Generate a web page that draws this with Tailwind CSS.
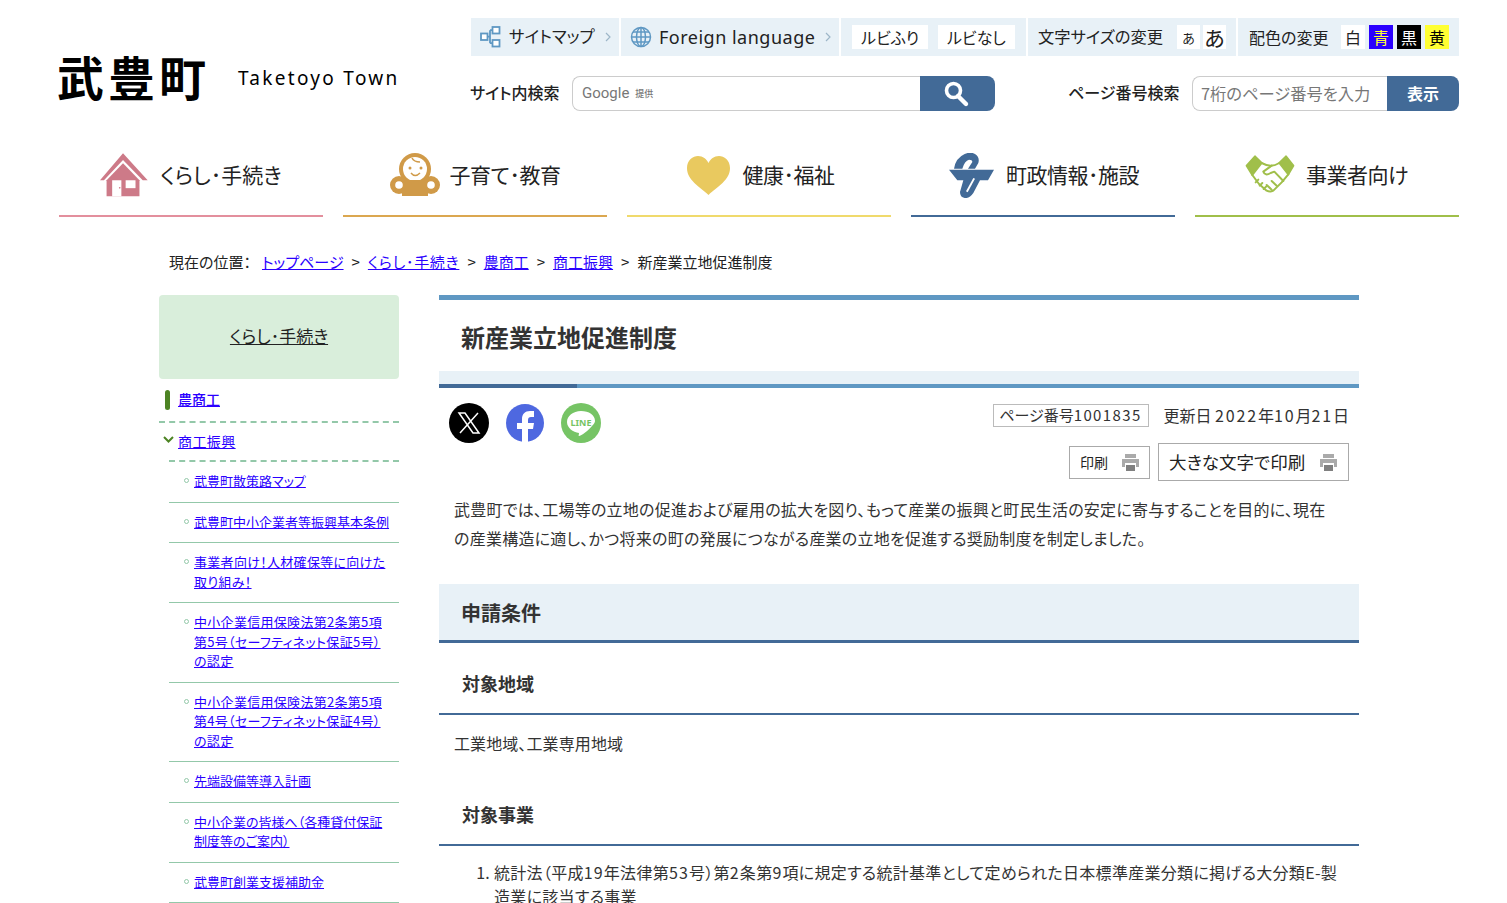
<!DOCTYPE html>
<html lang="ja">
  <head>
    <meta charset="UTF-8" />
    <title>新産業立地促進制度 - 武豊町</title>
    <script src="https://cdn.jsdelivr.net/npm/@tailwindcss/browser@4"></script>
  </head>
  <body class="h-[903px] overflow-hidden bg-white text-[#222] [font-feature-settings:'palt'] font-['Noto_Sans_CJK_JP','Noto_Sans',sans-serif]">
    <!-- header -->
    <header class="mx-[59px] w-[1400px] h-[130px] flex justify-between">
      <div class="flex items-center gap-[28px] pt-[26px] h-[130px]">
        <span class="-ml-[2px] mb-[6px] text-[47px] leading-none font-bold tracking-[4px] text-black">武豊町</span>
        <span class="text-[19px] tracking-[2.3px] text-black font-['Noto_Sans',sans-serif]">Taketoyo Town</span>
      </div>
      <div class="w-[988px] pt-[18px]">
        <div class="flex h-[38px] gap-[2px] text-[16.5px] leading-none">
          <a class="w-[148px] bg-[#e8f1f7] flex items-center pl-[9px] pb-[1px] whitespace-nowrap">
            <svg class="w-[22px] h-[22px] mr-[7px]" viewBox="0 0 22 22" fill="#fff" stroke="#5f98c3" stroke-width="1.8"><rect x="1" y="7.5" width="6.5" height="6.5"/><rect x="12.5" y="1" width="7" height="6.5"/><rect x="12.5" y="14" width="7" height="6.5"/><path d="M7.5 10.7h2.5M10 4.2v13M10 4.2h2.5M10 17.2h2.500" fill="none"/></svg>
            <span>サイトマップ</span>
            <svg class="ml-[10px] w-[6px] h-[10px]" viewBox="0 0 6 10" fill="none" stroke="#9db6c8" stroke-width="1.200"><path d="M1 1l4 4-4 4"/></svg>
          </a>
          <a class="w-[218px] bg-[#e8f1f7] flex items-center pl-[9px] pb-[1px] whitespace-nowrap">
            <svg class="w-[22px] h-[22px] mr-[7px]" viewBox="0 0 22 22" fill="none" stroke="#5f98c3" stroke-width="1.5"><circle cx="11" cy="11" r="9.500"/><ellipse cx="11" cy="11" rx="4.500" ry="9.500"/><path d="M11 1.500v19M1.500 11h19M3 6h16M3 16h16"/></svg>
            <span class="text-[18px] font-['Noto_Sans',sans-serif] tracking-[0.5px]">Foreign language</span>
            <svg class="ml-[10px] w-[6px] h-[10px]" viewBox="0 0 6 10" fill="none" stroke="#9db6c8" stroke-width="1.200"><path d="M1 1l4 4-4 4"/></svg>
          </a>
          <div class="w-[185px] bg-[#e8f1f7] flex items-center justify-center gap-[10px] text-[16px]">
            <span class="bg-white px-[9px] h-[24px] flex items-center pb-[1px]">ルビふり</span>
            <span class="bg-white px-[9px] h-[24px] flex items-center pb-[1px]">ルビなし</span>
          </div>
          <div class="w-[208px] bg-[#e8f1f7] flex items-center pl-[10px] text-[16.3px]">
            <span class="pb-[1px]">文字サイズの変更</span>
            <span class="ml-auto bg-white w-[23px] h-[24px] flex items-center justify-center text-[13px]">あ</span>
            <span class="ml-[3px] mr-[10px] bg-white w-[23px] h-[24px] flex items-center justify-center text-[21px]">あ</span>
          </div>
          <div class="flex-1 bg-[#e8f1f7] flex items-center pl-[11px] text-[16px]">
            <span class="pb-[1px]">配色の変更</span>
            <span class="ml-auto bg-white w-[24px] h-[24px] flex items-center justify-center">白</span>
            <span class="ml-[4px] bg-[#2a00ff] text-[#ffff33] w-[24px] h-[24px] flex items-center justify-center">青</span>
            <span class="ml-[4px] bg-black text-white w-[24px] h-[24px] flex items-center justify-center">黒</span>
            <span class="ml-[4px] mr-[10px] bg-[#ffff33] text-black w-[24px] h-[24px] flex items-center justify-center">黄</span>
          </div>
        </div>
        <div class="flex items-center mt-[20px] h-[35px]">
          <span class="w-[101px] shrink-0 -ml-[1px] -mt-[3px] text-[16px] font-medium whitespace-nowrap">サイト内検索</span>
          <div class="w-[423px] ml-[1px] h-[35px] flex">
            <div class="flex-1 border border-[#ccc] border-r-0 rounded-l-[8px] flex items-center pl-[9px] text-[#777]">
              <span class="text-[15px] font-['Roboto',sans-serif]">Google</span>
              <span class="text-[9px] ml-[6px] font-medium">提供</span>
            </div>
            <div class="w-[75px] bg-[#426a97] rounded-r-[8px] flex items-center justify-center pr-[4px]">
              <svg class="w-[28px] h-[28px]" viewBox="0 0 28 28" fill="none" stroke="#fff"><circle cx="11.500" cy="10.500" r="7" stroke-width="3.600"/><path d="M16 16l8 8" stroke-width="4.400" stroke-linecap="round"/></svg>
            </div>
          </div>
          <span class="ml-[73px] w-[124px] shrink-0 -mt-[3px] text-[16px] font-medium whitespace-nowrap">ページ番号検索</span>
          <div class="w-[267px] h-[35px] flex">
            <div class="flex-1 border border-[#ccc] border-r-0 rounded-l-[8px] flex items-center pl-[8px] text-[16.3px] text-[#777] whitespace-nowrap">7桁のページ番号を入力</div>
            <div class="w-[72px] bg-[#426a97] rounded-r-[8px] flex items-center justify-center text-white font-bold text-[16px] pb-[2px]">表示</div>
          </div>
        </div>
      </div>
    </header>

    <!-- global nav -->
    <nav class="mx-[59px] w-[1400px] grid grid-cols-5 gap-[20px] h-[87px]">
      <a class="flex items-center justify-center gap-[12px] border-b-2 border-[#e38f9d] pt-[5px] text-[21px]">
        <svg class="w-[48px] h-[44px]" viewBox="15 15 146 132">
          <path d="M85 15L160 97H145L85 35 27 97H15Z" fill="#cd7a88"/>
          <path d="M85 45L135 97V146H35V97Z" fill="#cd7a88"/>
          <rect x="52" y="97" width="28" height="49" fill="#fff"/>
          <rect x="93" y="97" width="30" height="24" fill="#fff"/>
          <circle cx="75" cy="120" r="2.500" fill="#cd7a88"/>
        </svg>
        <span>くらし･手続き</span>
      </a>
      <a class="flex items-center justify-center gap-[10px] border-b-2 border-[#dba750] pt-[5px] text-[21px] tracking-[-0.5px]">
        <svg class="w-[50px] h-[44px]" viewBox="0 0 50 44"><circle cx="25" cy="16" r="16" fill="#d09a48"/><circle cx="25" cy="16" r="12" fill="#fff"/><circle cx="9" cy="32" r="9" fill="#d09a48"/><circle cx="41" cy="32" r="9" fill="#d09a48"/><rect x="12" y="27" width="26" height="16" fill="#d09a48"/><circle cx="9" cy="32" r="3.800" fill="#fff"/><circle cx="41" cy="32" r="3.800" fill="#fff"/><circle cx="20" cy="15" r="1.500" fill="#d09a48"/><circle cx="31" cy="15" r="1.500" fill="#d09a48"/><path d="M21 20q4 5 9 0M22 5q2 4 8 4" fill="none" stroke="#d09a48" stroke-width="1.500"/></svg>
        <span>子育て･教育</span>
      </a>
      <a class="flex items-center justify-center gap-[13px] border-b-2 border-[#f0da6c] pt-[5px] pl-[3px] text-[21px] tracking-[-0.5px]">
        <svg class="w-[43px] h-[39px]" viewBox="0 0 43 39"><path d="M21.500 39C12 30 0 24 0 12 0 4 6 0 11 0c5 0 8.500 3 10.500 7C23.500 3 27 0 32 0c5 0 11 4 11 12 0 12-12 18-21.500 27Z" fill="#e9c95f"/></svg>
        <span>健康･福祉</span>
      </a>
      <a class="flex items-center justify-center gap-[12px] border-b-2 border-[#426a97] pt-[5px] pl-[2px] text-[21px] tracking-[-0.5px]">
        <svg class="w-[45px] h-[45px]" viewBox="15 15 135 135" fill="#426a97">
          <path d="M15 65H150L132 97H108L88 135Q76 152 62 150 48 148 48 132L58 97H40Z"/>
          <path d="M30 62Q35 30 62 18 80 10 93 18 108 28 103 45L93 62H72L85 42Q85 35 75 35 62 38 55 62Z"/>
          <path d="M66 130L88 90 93 92 71 133Z" fill="#fff"/>
        </svg>
        <span>町政情報･施設</span>
      </a>
      <a class="flex items-center justify-center gap-[11px] border-b-2 border-[#a0bf4a] pt-[5px] pr-[1px] text-[21px] tracking-[-0.5px]">
        <svg class="w-[50px] h-[40px]" viewBox="20 18 150 120" fill="none" stroke="#a0bf4a" stroke-width="6" stroke-linejoin="round" stroke-linecap="round">
          <path d="M25 50L50 22 70 42 42 78Z" fill="#a0bf4a"/>
          <path d="M165 50L143 22 123 42 150 76Z" fill="#a0bf4a"/>
          <path d="M70 42Q85 50 97 50 110 50 123 42M42 78L62 105 85 125Q95 130 105 125L130 100 150 76"/>
          <path d="M100 50L75 68Q80 82 97 72L108 68 135 96M115 110L100 96M100 122L85 108"/>
          <path d="M60 92L52 100M72 102L64 110M84 112L76 120"/>
        </svg>
        <span>事業者向け</span>
      </a>
    </nav>

    <!-- breadcrumb -->
    <div class="ml-[169px] mt-[35px] text-[15px] leading-[20px] flex gap-[8px] h-[20px]">
      <span class="mr-[3px]">現在の位置：</span>
      <a class="text-[#2a00ff] underline">トップページ</a><span>&gt;</span>
      <a class="text-[#2a00ff] underline tracking-[0.7px]">くらし･手続き</a><span>&gt;</span>
      <a class="text-[#2a00ff] underline">農商工</a><span>&gt;</span>
      <a class="text-[#2a00ff] underline">商工振興</a><span>&gt;</span>
      <span>新産業立地促進制度</span>
    </div>

    <div class="ml-[159px] mt-[23px] w-[1200px] flex gap-[40px] items-start">
      <!-- side menu -->
      <aside class="w-[240px] shrink-0">
        <div class="h-[84px] bg-[#d9eedb] rounded-[4px] flex items-center justify-center text-[17px] underline pb-[2px]">くらし･手続き</div>
        <div class="h-[44px] border-b-2 border-dashed border-[#93c8a9] flex items-center">
          <span class="ml-[6px] w-[5px] h-[20px] bg-[#4d8424] rounded-[3px]"></span>
          <a class="ml-[8px] pb-[2px] text-[14px] font-medium text-[#2a00ff] underline">農商工</a>
        </div>
        <div class="ml-[10px] h-[39px] border-b-2 border-dashed border-[#93c8a9] flex items-center relative">
          <svg class="absolute -left-[6px] top-[13px] w-[11px] h-[8px]" viewBox="0 0 11 8" fill="none" stroke="#4d8424" stroke-width="2"><path d="M1 1l4.500 4.500L10 1"/></svg>
          <a class="ml-[9px] text-[14px] tracking-[0.4px] text-[#2a00ff] underline">商工振興</a>
        </div>
        <ul class="ml-[10px] text-[13px] leading-[19.500px] text-[#2a00ff]">
          <li class="border-b border-[#93c8a9] pt-[9px] pb-[11px] pl-[15px] flex"><span class="mr-[5px] mt-[7px] w-[5px] h-[5px] rounded-full border border-[#93c8a9] shrink-0"></span><a class="underline">武豊町散策路マップ</a></li>
          <li class="border-b border-[#93c8a9] pt-[9px] pb-[11px] pl-[15px] flex"><span class="mr-[5px] mt-[7px] w-[5px] h-[5px] rounded-full border border-[#93c8a9] shrink-0"></span><a class="underline">武豊町中小企業者等振興基本条例</a></li>
          <li class="border-b border-[#93c8a9] pt-[9px] pb-[11px] pl-[15px] flex"><span class="mr-[5px] mt-[7px] w-[5px] h-[5px] rounded-full border border-[#93c8a9] shrink-0"></span><a class="underline tracking-[0.3px]">事業者向け！人材確保等に向けた<br />取り組み！</a></li>
          <li class="border-b border-[#93c8a9] pt-[9px] pb-[11px] pl-[15px] flex"><span class="mr-[5px] mt-[7px] w-[5px] h-[5px] rounded-full border border-[#93c8a9] shrink-0"></span><a class="underline tracking-[0.3px]">中小企業信用保険法第2条第5項<br />第5号（セーフティネット保証5号）<br />の認定</a></li>
          <li class="border-b border-[#93c8a9] pt-[9px] pb-[11px] pl-[15px] flex"><span class="mr-[5px] mt-[7px] w-[5px] h-[5px] rounded-full border border-[#93c8a9] shrink-0"></span><a class="underline tracking-[0.3px]">中小企業信用保険法第2条第5項<br />第4号（セーフティネット保証4号）<br />の認定</a></li>
          <li class="border-b border-[#93c8a9] pt-[9px] pb-[11px] pl-[15px] flex"><span class="mr-[5px] mt-[7px] w-[5px] h-[5px] rounded-full border border-[#93c8a9] shrink-0"></span><a class="underline">先端設備等導入計画</a></li>
          <li class="border-b border-[#93c8a9] pt-[9px] pb-[11px] pl-[15px] flex"><span class="mr-[5px] mt-[7px] w-[5px] h-[5px] rounded-full border border-[#93c8a9] shrink-0"></span><a class="underline">中小企業の皆様へ（各種貸付保証<br />制度等のご案内）</a></li>
          <li class="border-b border-[#93c8a9] pt-[9px] pb-[11px] pl-[15px] flex"><span class="mr-[5px] mt-[7px] w-[5px] h-[5px] rounded-full border border-[#93c8a9] shrink-0"></span><a class="underline">武豊町創業支援補助金</a></li>
        </ul>
      </aside>

      <!-- main -->
      <main class="w-[920px]">
        <div class="border-t-[5px] border-[#5f98c3] h-[76px] flex items-center pl-[22px] pt-[2px] text-[24px] font-bold text-[#333]">新産業立地促進制度</div>
        <div class="h-[17px] bg-[#e8f1f7] flex flex-col justify-end">
          <div class="h-[4px] bg-[#5f98c3]"><div class="h-[4px] w-[138px] bg-[#426a97]"></div></div>
        </div>

        <div class="flex justify-between pl-[10px] pr-[10px] h-[94px]">
          <div class="flex gap-[16px] pt-[15px] items-start">
            <svg class="w-[40px] h-[40px]" viewBox="0 0 40 40"><circle cx="20" cy="20" r="20" fill="#000"/><path d="M10 10h6l14 20h-6ZM29 10L11 30" fill="none" stroke="#fff" stroke-width="1.500"/></svg>
            <svg class="w-[40px] h-[40px]" viewBox="0 0 40 40"><circle cx="20" cy="20" r="19" fill="#4e68e0"/><path d="M17 39V26h-5v-6h5v-4c0-5 3-8 8-8h4v6h-3c-2 0-3 1-3 3v3h6l-1 6h-5v13Z" fill="#fff"/></svg>
            <svg class="w-[40px] h-[40px]" viewBox="0 0 40 40"><circle cx="20" cy="20" r="20" fill="#76c465"/><path d="M20 8c-8 0-14 5-14 11 0 6 6 10 12 11 0 2-1 3 0 3 2 0 10-6 13-10 2-2 3-4 3-5 0-6-6-10-14-10Z" fill="#fff"/><text x="20" y="23" text-anchor="middle" font-size="9" font-weight="700" fill="#76c465" font-family="Noto Sans">LINE</text></svg>
          </div>
          <div class="flex flex-col items-end pt-[15px]">
            <div class="flex items-center">
              <span class="border border-[#bbb] h-[23px] w-[156px] flex items-center justify-center text-[15px] text-[#333]">ページ番号<span class="tracking-[1.4px]">1001835</span></span>
              <span class="ml-[15px] text-[16px] text-[#333]">更新日 <span class="tracking-[1.850px]">2022</span>年<span class="tracking-[1.850px]">10</span>月<span class="tracking-[1.850px]">21</span>日</span>
            </div>
            <div class="flex items-center gap-[8px] mt-[16px]">
              <span class="border border-[#aaa] h-[33px] w-[81px] flex items-center pl-[10px] gap-[14px] text-[14px]">印刷
                <svg class="w-[17px] h-[17px]" viewBox="0 0 17 17" fill="#aaa"><path d="M3 0h11v4H3zM0 5h17v8h-3V9H3v4H0z" /><rect x="4" y="11" width="9" height="6" fill="#808080"/></svg>
              </span>
              <span class="border border-[#aaa] h-[38px] w-[191px] flex items-center pl-[10px] gap-[15px] text-[17.500px]">大きな文字で印刷
                <svg class="w-[17px] h-[17px]" viewBox="0 0 17 17" fill="#aaa"><path d="M3 0h11v4H3zM0 5h17v8h-3V9H3v4H0z" /><rect x="4" y="11" width="9" height="6" fill="#808080"/></svg>
              </span>
            </div>
          </div>
        </div>

        <p class="mx-[15px] mt-[13px] text-[16px] leading-[29px] tracking-[0.24px] text-[#333]">武豊町では、工場等の立地の促進および雇用の拡大を図り、もって産業の振興と町民生活の安定に寄与することを目的に、現在<br />の産業構造に適し、かつ将来の町の発展につながる産業の立地を促進する奨励制度を制定しました。</p>

        <h2 class="mt-[31px] h-[59px] bg-[#e8f1f7] border-b-[3px] border-[#426a97] flex items-center pl-[22px] pt-[2px] text-[20px] font-bold text-[#333]">申請条件</h2>
        <h3 class="h-[72px] border-b-2 border-[#426a97] flex items-center pl-[23px] pt-[10px] text-[18px] font-bold text-[#333]">対象地域</h3>
        <p class="ml-[15px] mt-[14px] text-[16px] leading-[29px] tracking-[0.1px] text-[#333]">工業地域、工業専用地域</p>
        <h3 class="mt-[27px] h-[61px] border-b-2 border-[#426a97] flex items-center pl-[23px] text-[18px] font-bold text-[#333]">対象事業</h3>
        <ol class="mt-[14px] ml-[55px] mr-[15px] list-decimal text-[16px] leading-[24px] tracking-[0.3px] text-[#333]">
          <li>統計法（平成<span class="tracking-[1.1px]">19</span>年法律第<span class="tracking-[1.1px]">53</span>号）第<span class="tracking-[1.1px]">2</span>条第<span class="tracking-[1.1px]">9</span>項に規定する統計基準として定められた日本標準産業分類に掲げる大分類E-製<br />造業に該当する事業</li>
        </ol>
      </main>
    </div>
  </body>
</html>
